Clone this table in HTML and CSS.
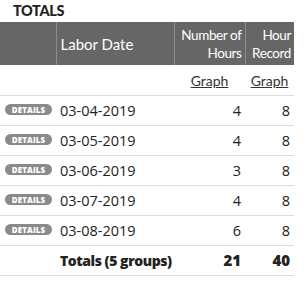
FILE: index.html
```html
<!DOCTYPE html>
<html>
<head>
<meta charset="utf-8">
<link rel="stylesheet" href="styles.css">
</head>
<body>
<div class="title">TOTALS</div>
<table class="grid">
  <colgroup>
    <col class="c1"><col class="c2"><col class="c3"><col class="c4">
  </colgroup>
  <thead>
    <tr class="head">
      <th></th>
      <th class="left">Labor Date</th>
      <th class="right">Number of<br>Hours</th>
      <th class="right">Hour<br>Record</th>
    </tr>
  </thead>
  <tbody>
    <tr class="graphs">
      <td></td><td></td>
      <td class="center"><a class="link">Graph</a></td>
      <td class="center"><a class="link">Graph</a></td>
    </tr>
    <tr><td><span class="badge">DETAILS</span></td><td class="date">03-04-2019</td><td class="num">4</td><td class="num">8</td></tr>
    <tr><td><span class="badge">DETAILS</span></td><td class="date">03-05-2019</td><td class="num">4</td><td class="num">8</td></tr>
    <tr><td><span class="badge">DETAILS</span></td><td class="date">03-06-2019</td><td class="num">3</td><td class="num">8</td></tr>
    <tr><td><span class="badge">DETAILS</span></td><td class="date">03-07-2019</td><td class="num">4</td><td class="num">8</td></tr>
    <tr><td><span class="badge">DETAILS</span></td><td class="date">03-08-2019</td><td class="num">6</td><td class="num">8</td></tr>
    <tr class="totals"><td></td><td class="tlabel">Totals (5 groups)</td><td class="num">21</td><td class="num">40</td></tr>
  </tbody>
</table>
</body>
</html>
```
FILE: styles.css
```css
html, body {
  margin: 0;
  padding: 0;
  background: #fff;
}
body {
  font-family: "Open Sans", sans-serif;
  color: #222;
}
.title {
  font-family: Lato, sans-serif;
  font-weight: 900;
  font-size: 14.5px;
  letter-spacing: -0.4px;
  line-height: 22px;
  padding-left: 13px;
  height: 22px;
  color: #222;
}
.grid {
  border-collapse: collapse;
  width: 294px;
  table-layout: fixed;
}
.c1 { width: 56px; }
.c2 { width: 118px; }
.c3 { width: 71px; }
.c4 { width: 49px; }
.head th {
  background: #666;
  color: #fff;
  font-family: Lato, sans-serif;
  font-weight: 400;
  font-size: 14px;
  line-height: 18px;
  height: 43px;
  padding: 0 3px 0 0;
  vertical-align: middle;
  border-left: 1px solid #8c8c8c;
  box-sizing: border-box;
  white-space: nowrap;
}
.head th:first-child { border-left: none; }
.head th.left { text-align: left; padding-left: 4px; font-size: 15px; }
.head th.right { text-align: right; font-size: 13.5px; letter-spacing: -0.4px; }
.graphs td {
  border-bottom: 1px solid #ddd;
  padding: 0 4px;
  box-sizing: border-box;
}
.center { text-align: center; }
.link {
  font-family: Lato, sans-serif;
  font-size: 14px;
  color: #333;
  text-decoration: underline;
}
tbody tr td {
  height: 30px;
  border-bottom: 1px solid #ddd;
  padding: 0 4px;
  box-sizing: border-box;
  vertical-align: middle;
  white-space: nowrap;
}
.badge {
  display: inline-block;
  background: #8a8a8a;
  color: #fff;
  font-family: "Open Sans", sans-serif;
  font-weight: 800;
  font-size: 8px;
  line-height: 11px;
  height: 11px;
  width: 47px;
  text-align: center;
  border-radius: 6px;
  margin-left: 1px;
  position: relative;
  top: -3px;
  letter-spacing: 0.1px;
}
.date {
  font-size: 14.5px;
  color: #222;
}
.num {
  text-align: right;
  font-size: 14.5px;
}
.totals td {
  font-weight: 800;
}
.tlabel {
  font-family: "Open Sans", sans-serif;
  font-size: 14px;
  letter-spacing: -0.45px;
}
.totals .num {
  font-size: 15px;
}
```
